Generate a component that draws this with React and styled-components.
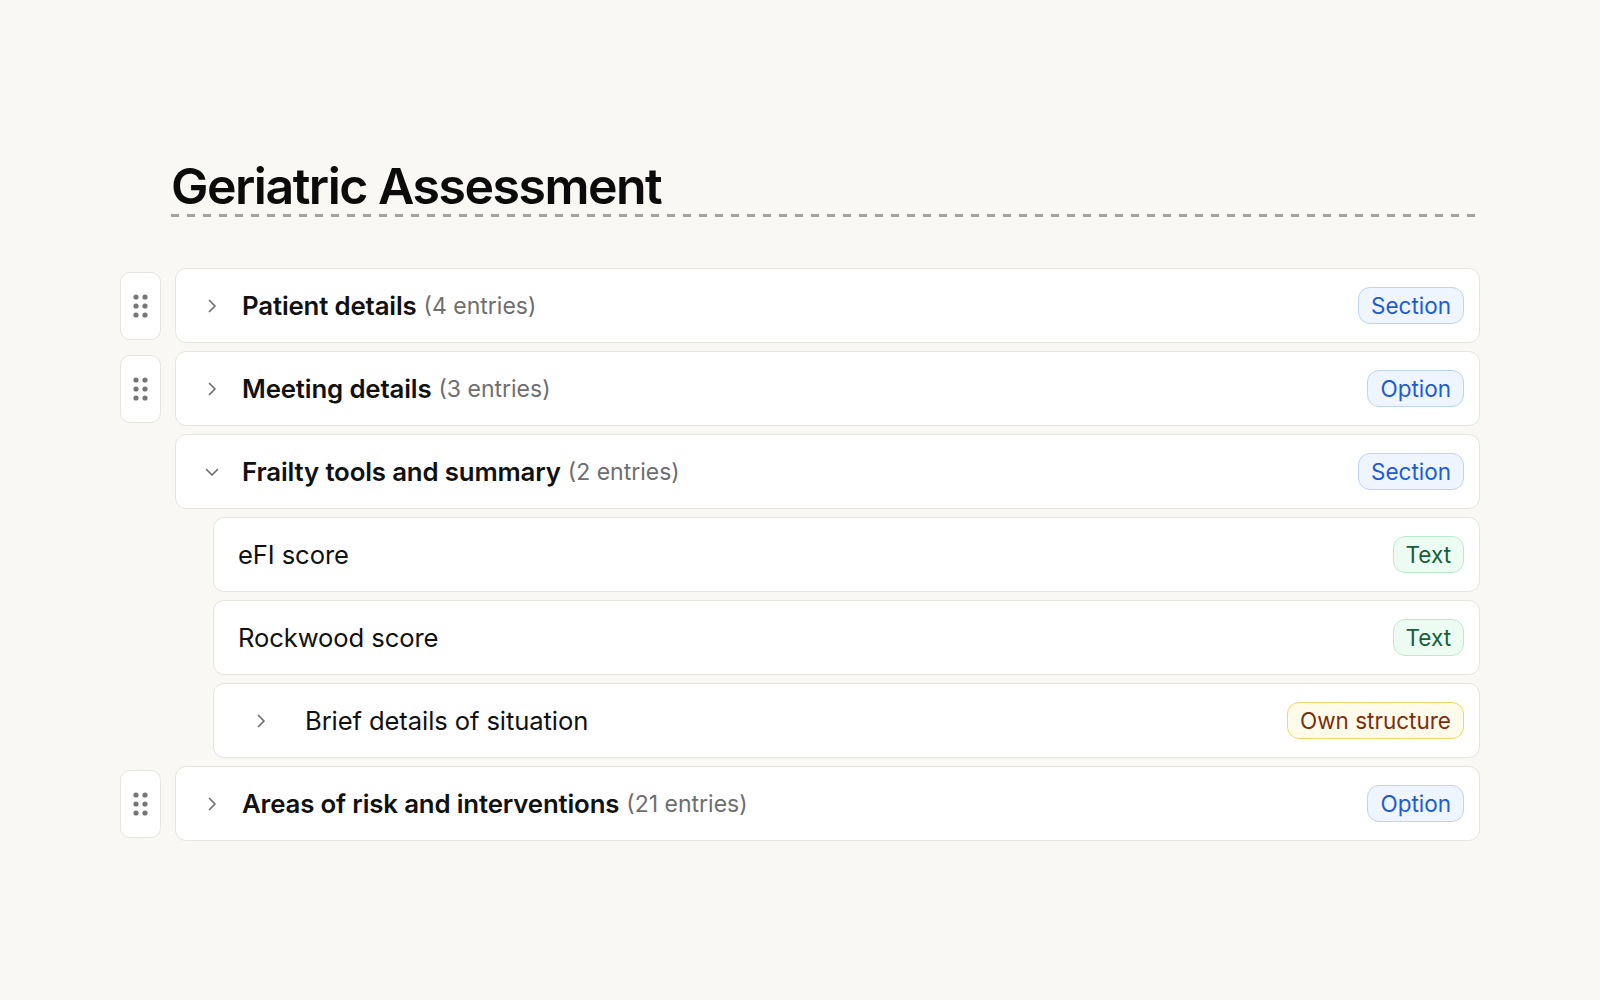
import React from 'react'
import styled, { createGlobalStyle } from 'styled-components'

const Global = createGlobalStyle`
  html, body {
    margin: 0;
    padding: 0;
    background: #f9f8f5;
  }
  body {
    font-family: Inter, "Noto Sans", sans-serif;
    color: #111;
  }
`

const Page = styled.div`
  width: 1600px;
  height: 1000px;
  box-sizing: border-box;
  padding: 156px 120px 0 120px;
`

const Header = styled.div`
  margin-left: 51px;
  margin-bottom: 51px;
`

const Title = styled.h1`
  margin: 0;
  font-size: 50px;
  line-height: 60px;
  font-weight: 600;
  letter-spacing: -1.5px;
  color: #0b0b0b;
`

const Dashes = styled.div`
  height: 3px;
  margin-top: -2px;
  background: repeating-linear-gradient(to right, #a3a3a3 0 8px, transparent 8px 16px);
`

const List = styled.div`
  display: flex;
  flex-direction: column;
  gap: 8px;
`

const Item = styled.div`
  display: flex;
  align-items: center;
  gap: 14px;
  padding-left: ${(p) => (p.$nested ? '93px' : '0')};
`

const Handle = styled.div`
  width: 41px;
  height: 68px;
  flex: none;
  box-sizing: border-box;
  display: flex;
  align-items: center;
  justify-content: center;
  background: ${(p) => (p.$empty ? 'transparent' : '#fff')};
  border: 1.5px solid ${(p) => (p.$empty ? 'transparent' : '#e6e4e0')};
  border-radius: 10px;
`

const Card = styled.div`
  flex: 1;
  height: 75px;
  box-sizing: border-box;
  display: flex;
  align-items: center;
  padding: 0 15px 0 ${(p) => p.$pad}px;
  background: #fff;
  border: 1.5px solid #e6e4e0;
  border-radius: 11px;
`

const Chevron = styled.span`
  width: 22px;
  height: 22px;
  display: flex;
  align-items: center;
  justify-content: center;
  margin-right: ${(p) => p.$gap}px;
  color: #6f6f6f;
`

const Name = styled.span`
  font-size: ${(p) => (p.$bold ? 25.8 : 25.6)}px;
  font-weight: ${(p) => (p.$bold ? 600 : 400)};
  color: #111;
  letter-spacing: ${(p) => (p.$bold ? -0.15 : -0.1)}px;
`

const Count = styled.span`
  margin-left: 7px;
  font-size: 23px;
  color: #6e6e6e;
`

const tones = {
  blue: { bg: '#eef5ff', border: '#bcd4f5', fg: '#1d5bd6' },
  green: { bg: '#edfcf3', border: '#b9ebcf', fg: '#15603a' },
  yellow: { bg: '#fffbea', border: '#f6d46c', fg: '#7c2d12' },
}

const Badge = styled.span`
  margin-left: auto;
  height: 37px;
  box-sizing: border-box;
  display: inline-flex;
  align-items: center;
  padding: 0 12px;
  font-size: 22.5px;
  border-radius: 12px;
  background: ${(p) => tones[p.$tone].bg};
  border: 1.5px solid ${(p) => tones[p.$tone].border};
  color: ${(p) => tones[p.$tone].fg};
`

const Dots = () => (
  <svg width="15" height="24" viewBox="0 0 15 24" fill="#767676">
    {[3, 12, 21].map((y) =>
      [3, 12].map((x) => <circle key={`${x}-${y}`} cx={x} cy={y} r="2.6" />)
    )}
  </svg>
)

const Arrow = ({ open }) => (
  <svg width="18" height="18" viewBox="0 0 18 18" fill="none" stroke="currentColor"
    strokeWidth="1.7" strokeLinecap="round" strokeLinejoin="round">
    {open ? <path d="M3.5 6.5l5.5 5.5 5.5-5.5" /> : <path d="M6.5 3.5l5.5 5.5-5.5 5.5" />}
  </svg>
)

const rows = [
  { name: 'Patient details', count: 4, badge: 'Section', tone: 'blue', handle: true },
  { name: 'Meeting details', count: 3, badge: 'Option', tone: 'blue', handle: true },
  { name: 'Frailty tools and summary', count: 2, badge: 'Section', tone: 'blue', open: true },
  { name: 'eFI score', badge: 'Text', tone: 'green', nested: true },
  { name: 'Rockwood score', badge: 'Text', tone: 'green', nested: true },
  { name: 'Brief details of situation', badge: 'Own structure', tone: 'yellow', nested: true, expandable: true },
  { name: 'Areas of risk and interventions', count: 21, badge: 'Option', tone: 'blue', handle: true },
]

export default function App() {
  return (
    <Page>
      <Global />
      <Header>
        <Title>Geriatric Assessment</Title>
        <Dashes />
      </Header>
      <List>
        {rows.map((r) => (
          <Item key={r.name} $nested={r.nested}>
            {!r.nested && (
              <Handle $empty={!r.handle}>{r.handle && <Dots />}</Handle>
            )}
            {r.nested ? (
              <Card $pad={r.expandable ? 36 : 24}>
                {r.expandable && (
                  <Chevron $gap={33}><Arrow /></Chevron>
                )}
                <Name>{r.name}</Name>
                <Badge $tone={r.tone}>{r.badge}</Badge>
              </Card>
            ) : (
              <Card $pad={25}>
                <Chevron $gap={19}><Arrow open={r.open} /></Chevron>
                <Name $bold>{r.name}</Name>
                <Count>({r.count} entries)</Count>
                <Badge $tone={r.tone}>{r.badge}</Badge>
              </Card>
            )}
          </Item>
        ))}
      </List>
    </Page>
  )
}
